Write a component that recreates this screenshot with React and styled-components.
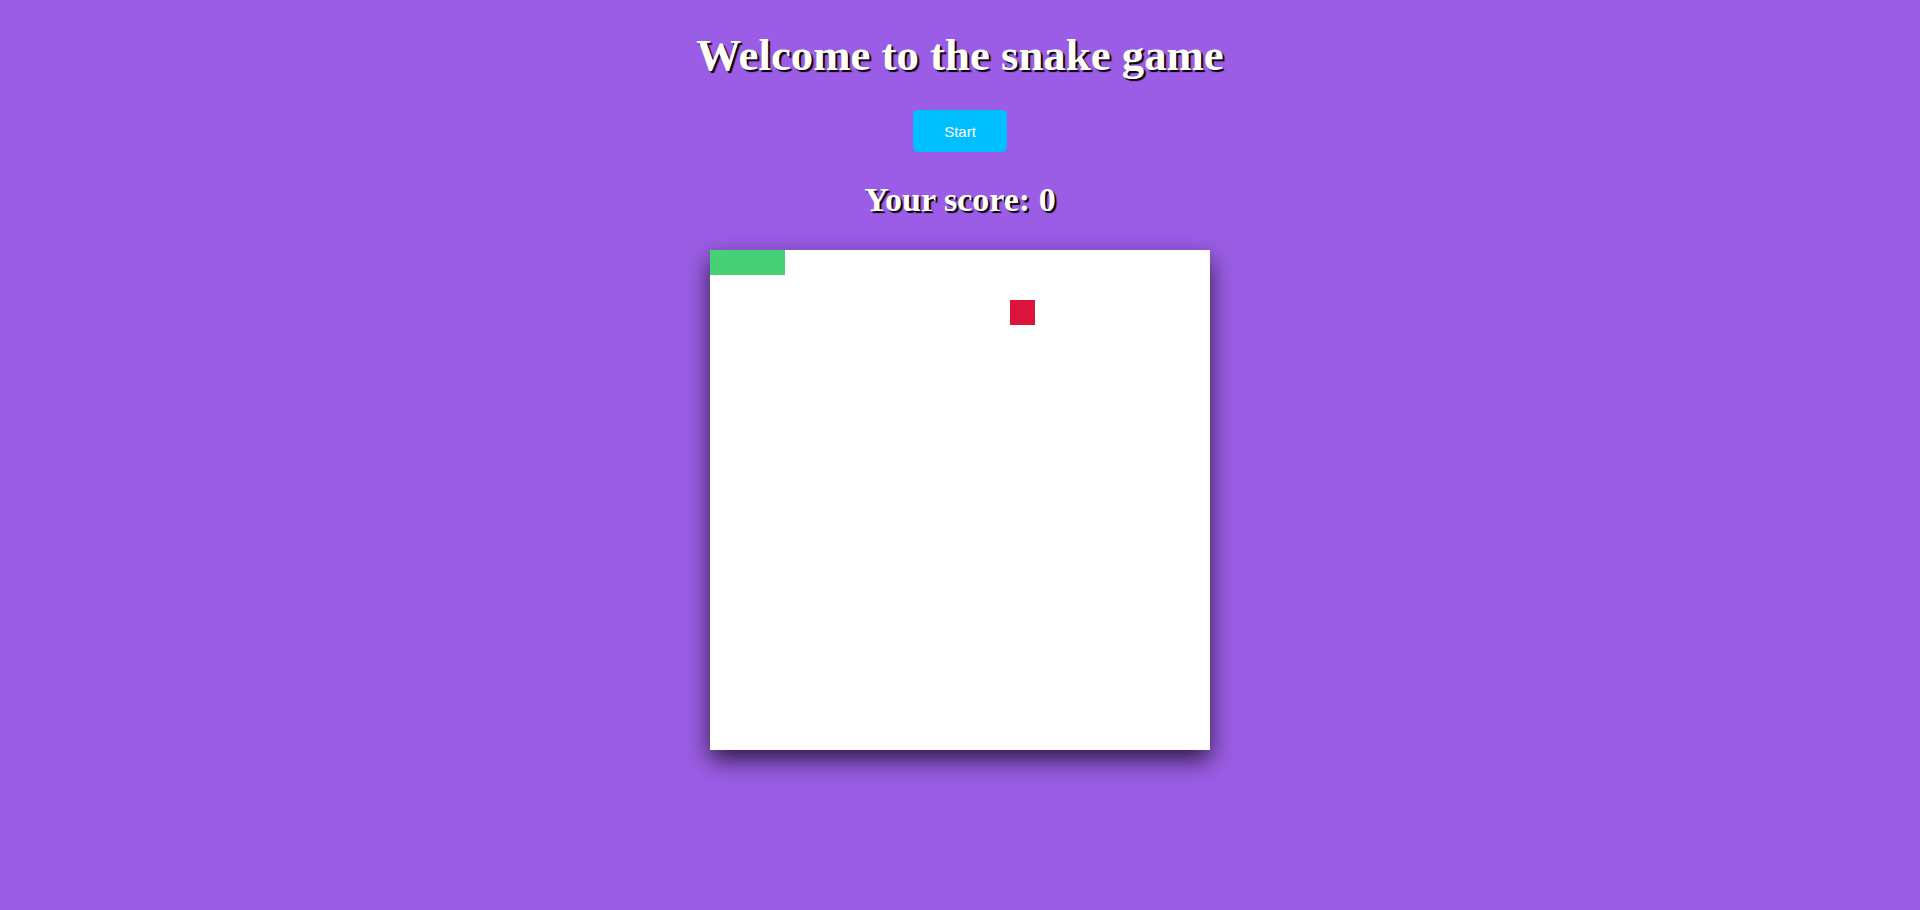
import React, { useState } from "react";
import styled, { createGlobalStyle } from "styled-components";

const CELL = 25;
const SIZE = 20;

const GlobalStyle = createGlobalStyle`
  html, body {
    margin: 0;
    padding: 0;
    background-color: #9b5de5;
    font-family: "Liberation Serif", "Times New Roman", serif;
  }
`;

const Page = styled.div`
  display: flex;
  flex-direction: column;
  align-items: center;
  min-height: 910px;
`;

const Title = styled.h1`
  margin: 29px 0 0;
  font-size: 44.8px;
  font-weight: bold;
  color: #fff;
  text-shadow: 2px 2px 1px #000;
`;

const StartButton = styled.button`
  margin-top: 29px;
  width: 94px;
  height: 42px;
  border: none;
  border-radius: 5px;
  background-color: #00bfff;
  color: #fff;
  font-family: "Liberation Sans", Arial, sans-serif;
  font-size: 15px;
  cursor: pointer;
`;

const Score = styled.h2`
  margin: 29px 0 0;
  font-size: 34px;
  font-weight: bold;
  color: #fff;
  text-shadow: 2px 2px 1px #000;
`;

const Board = styled.div`
  margin-top: 31px;
  display: grid;
  grid-template-columns: repeat(${SIZE}, ${CELL}px);
  grid-template-rows: repeat(${SIZE}, ${CELL}px);
  background-color: #fff;
  box-shadow: 0 10px 22px rgba(0, 0, 0, 0.7);
`;

const Cell = styled.div`
  grid-column: ${(props) => props.x + 1};
  grid-row: ${(props) => props.y + 1};
  background-color: ${(props) => (props.food ? "#dc143c" : "#47d176")};
`;

const App = () => {
  const [snake] = useState([
    [0, 0],
    [1, 0],
    [2, 0],
  ]);
  const [food] = useState([12, 2]);
  const [score] = useState(0);

  return (
    <Page>
      <GlobalStyle />
      <Title>Welcome to the snake game</Title>
      <StartButton>Start</StartButton>
      <Score>Your score: {score}</Score>
      <Board>
        {snake.map(([x, y]) => (
          <Cell key={`${x}-${y}`} x={x} y={y} />
        ))}
        <Cell food x={food[0]} y={food[1]} />
      </Board>
    </Page>
  );
};

export default App;
